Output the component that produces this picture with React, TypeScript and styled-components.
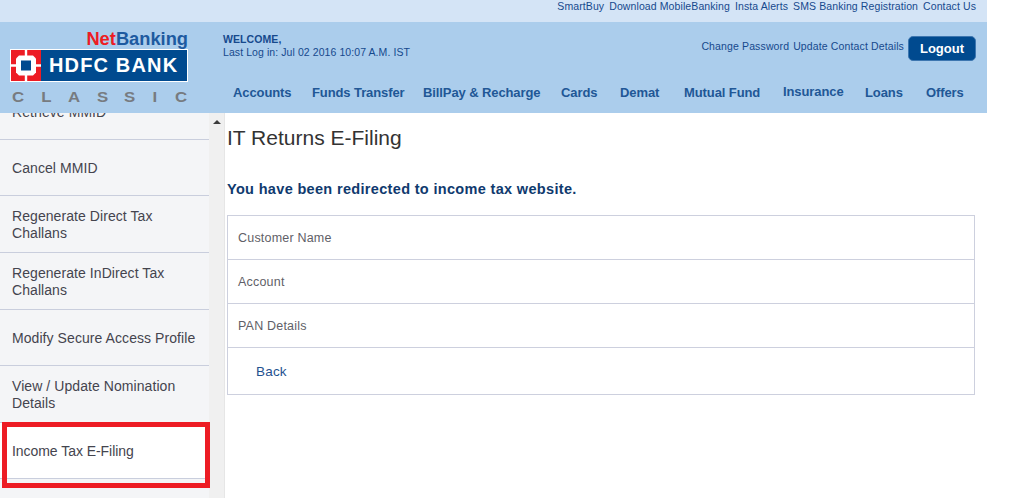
import React from 'react';
import styled, { createGlobalStyle } from 'styled-components';

const GlobalStyle = createGlobalStyle`
  html, body {
    margin: 0;
    padding: 0;
    background: #fff;
    overflow: hidden;
  }
  body {
    font-family: "Liberation Sans", Arial, sans-serif;
  }
`;

const Page = styled.div`
  width: 1035px;
  height: 498px;
  overflow: hidden;
  position: relative;
`;

const Shell = styled.div`
  width: 987px;
`;

const TopBar = styled.div`
  height: 22px;
  background: #d4e4f6;
  display: flex;
  justify-content: flex-end;
  gap: 5px;
  padding-right: 11px;
  font-size: 10.5px;
  line-height: 13px;
  color: #16498d;
  letter-spacing: 0.1px;
`;

const Header = styled.header`
  height: 91px;
  background: #abcdec;
  display: flex;
`;

const Brand = styled.div`
  width: 178px;
  margin-left: 10px;
  padding-top: 6px;
  flex-shrink: 0;
`;

const BrandTitle = styled.div`
  text-align: right;
  font-size: 18.3px;
  line-height: 21px;
  font-weight: bold;
  color: #1d5aa0;
  span {
    color: #ed1c24;
  }
`;

const BankPlate = styled.div`
  height: 33px;
  box-sizing: border-box;
  border: 1px solid #fff;
  background: #004a8f;
  display: flex;
  align-items: center;
  gap: 8px;
`;

const BankName = styled.div`
  color: #fff;
  font-size: 20px;
  font-weight: bold;
  letter-spacing: 1.15px;
  white-space: nowrap;
`;

const ClassicRow = styled.div`
  display: flex;
  justify-content: space-between;
  padding: 8px 2px 0 3px;
  font-size: 14px;
  line-height: 14px;
  font-weight: bold;
  color: #777b80;
`;

const ClassicLetter = styled.span`
  display: inline-block;
  transform: scaleX(1.2);
`;

const HeaderMain = styled.div`
  flex: 1;
  display: flex;
  flex-direction: column;
  min-width: 0;
`;

const InfoRow = styled.div`
  display: flex;
  justify-content: space-between;
  padding: 11px 11px 0 35px;
  height: 63px;
  box-sizing: border-box;
`;

const Welcome = styled.div`
  font-size: 10.5px;
  line-height: 13px;
  letter-spacing: 0.08px;
  color: #16498d;
  strong {
    display: block;
    color: #16498d;
  }
`;

const AccountLinks = styled.div`
  display: flex;
  align-items: flex-start;
  gap: 4px;
  font-size: 10.5px;
  color: #16498d;
  line-height: 26px;
  letter-spacing: 0.13px;
`;

const LogoutButton = styled.button`
  width: 68px;
  height: 25px;
  margin-top: 3px;
  padding: 0;
  border: 1px solid #3d76b0;
  border-radius: 5px;
  background: #004a8f;
  color: #fff;
  font-family: inherit;
  font-size: 13px;
  font-weight: bold;
`;

const Nav = styled.nav`
  display: flex;
  padding-left: 45px;
  font-size: 13px;
  font-weight: bold;
  color: #215796;
  line-height: 15px;
`;

const NavItem = styled.span<{ $width: number; $up?: boolean }>`
  width: ${(p) => p.$width}px;
  flex-shrink: 0;
  white-space: nowrap;
  margin-top: ${(p) => (p.$up ? '-1px' : '0')};
  letter-spacing: -0.1px;
`;

const Body = styled.div`
  display: flex;
  height: 385px;
`;

const Sidebar = styled.aside`
  width: 209px;
  background: #f4f5f7;
  overflow: hidden;
  flex-shrink: 0;
`;

const MenuList = styled.div`
  margin-top: -29px;
`;

const MenuItem = styled.div<{ $height: number; $active?: boolean }>`
  height: ${(p) => p.$height}px;
  box-sizing: border-box;
  display: flex;
  align-items: center;
  padding: 2px 12px 0;
  border-bottom: 1px solid #c9cedd;
  font-size: 14px;
  line-height: 17px;
  letter-spacing: ${(p) => (p.$active ? '-0.05px' : '0.07px')};
  color: #44444e;
  background: ${(p) => (p.$active ? '#fff' : 'transparent')};
`;

const ScrollTrack = styled.div`
  width: 16px;
  background: #f0f0f0;
  border-right: 1px solid #e6e6e6;
  box-sizing: border-box;
  flex-shrink: 0;
  display: flex;
  justify-content: center;
  padding-top: 7px;
`;

const ScrollArrow = styled.div`
  width: 0;
  height: 0;
  border-left: 4px solid transparent;
  border-right: 4px solid transparent;
  border-bottom: 4px solid #3c3c3c;
`;

const Content = styled.main`
  flex: 1;
  padding: 12px 12px 0 2px;
`;

const PageTitle = styled.h1`
  margin: 0;
  font-size: 21px;
  line-height: 25px;
  font-weight: normal;
  color: #333;
`;

const Notice = styled.h2`
  margin: 30px 0 0;
  font-size: 14.5px;
  line-height: 18px;
  font-weight: bold;
  color: #0f3a6e;
  letter-spacing: 0.33px;
`;

const DetailTable = styled.div`
  margin-top: 17px;
  border: 1px solid #cdd0de;
  border-bottom: 0;
`;

const DetailRow = styled.div`
  height: 44px;
  box-sizing: border-box;
  border-bottom: 1px solid #cdd0de;
  display: flex;
  align-items: center;
  padding-left: 10px;
  font-size: 12.5px;
  color: #5f5f68;
  letter-spacing: 0.2px;
`;

const BackRow = styled(DetailRow)`
  height: 47px;
  padding-left: 28px;
  font-size: 13.5px;
  color: #1f5290;
`;

const Highlight = styled.div`
  position: absolute;
  left: 2px;
  top: 422px;
  width: 208px;
  height: 66px;
  box-sizing: border-box;
  border: 5px solid #ed1c24;
  pointer-events: none;
`;

const BankMark = () => (
  <svg width="30" height="31" viewBox="0 0 30 31" style={{ flexShrink: 0 }}>
    <rect width="30" height="31" fill="#ed1c24" />
    <path d="M13.8 0h2.4v31h-2.4zM0 14.3h30v2.4H0z" fill="#fff" />
    <polygon points="8,5.5 22,5.5 25,8.5 25,22.5 22,25.5 8,25.5 5,22.5 5,8.5" fill="#fff" />
    <rect x="10" y="10.5" width="10" height="10" fill="#004a8f" />
  </svg>
);

const topLinks = ['SmartBuy', 'Download MobileBanking', 'Insta Alerts', 'SMS Banking Registration', 'Contact Us'];

const navItems = [
  { label: 'Accounts', width: 79 },
  { label: 'Funds Transfer', width: 111 },
  { label: 'BillPay & Recharge', width: 138 },
  { label: 'Cards', width: 59 },
  { label: 'Demat', width: 64 },
  { label: 'Mutual Fund', width: 99 },
  { label: 'Insurance', width: 82, up: true },
  { label: 'Loans', width: 61 },
  { label: 'Offers', width: 50 },
];

const menuItems = [
  { label: 'Retrieve MMID', height: 56 },
  { label: 'Cancel MMID', height: 56 },
  { label: 'Regenerate Direct Tax Challans', height: 57 },
  { label: 'Regenerate InDirect Tax Challans', height: 57 },
  { label: 'Modify Secure Access Profile', height: 56 },
  { label: 'View / Update Nomination Details', height: 57 },
  { label: 'Income Tax E-Filing', height: 56, active: true },
];

const App = () => {
  return (
    <Page>
      <GlobalStyle />
      <Shell>
        <TopBar>
          {topLinks.map((link) => (
            <span key={link}>{link}</span>
          ))}
        </TopBar>
        <Header>
          <Brand>
            <BrandTitle>
              <span>Net</span>Banking
            </BrandTitle>
            <BankPlate>
              <BankMark />
              <BankName>HDFC BANK</BankName>
            </BankPlate>
            <ClassicRow>
              {'CLASSIC'.split('').map((c, i) => (
                <ClassicLetter key={i}>{c}</ClassicLetter>
              ))}
            </ClassicRow>
          </Brand>
          <HeaderMain>
            <InfoRow>
              <Welcome>
                <strong>WELCOME,</strong>
                Last Log in: Jul 02 2016 10:07 A.M. IST
              </Welcome>
              <AccountLinks>
                <span>Change Password</span>
                <span>Update Contact Details</span>
                <LogoutButton>Logout</LogoutButton>
              </AccountLinks>
            </InfoRow>
            <Nav>
              {navItems.map((item) => (
                <NavItem key={item.label} $width={item.width} $up={item.up}>
                  {item.label}
                </NavItem>
              ))}
            </Nav>
          </HeaderMain>
        </Header>
        <Body>
          <Sidebar>
            <MenuList>
              {menuItems.map((item) => (
                <MenuItem key={item.label} $height={item.height} $active={item.active}>
                  <span>{item.label}</span>
                </MenuItem>
              ))}
            </MenuList>
          </Sidebar>
          <ScrollTrack>
            <ScrollArrow />
          </ScrollTrack>
          <Content>
            <PageTitle>IT Returns E-Filing</PageTitle>
            <Notice>You have been redirected to income tax website.</Notice>
            <DetailTable>
              <DetailRow>Customer Name</DetailRow>
              <DetailRow>Account</DetailRow>
              <DetailRow>PAN Details</DetailRow>
              <BackRow>Back</BackRow>
            </DetailTable>
          </Content>
        </Body>
      </Shell>
      <Highlight />
    </Page>
  );
};

export default App;
